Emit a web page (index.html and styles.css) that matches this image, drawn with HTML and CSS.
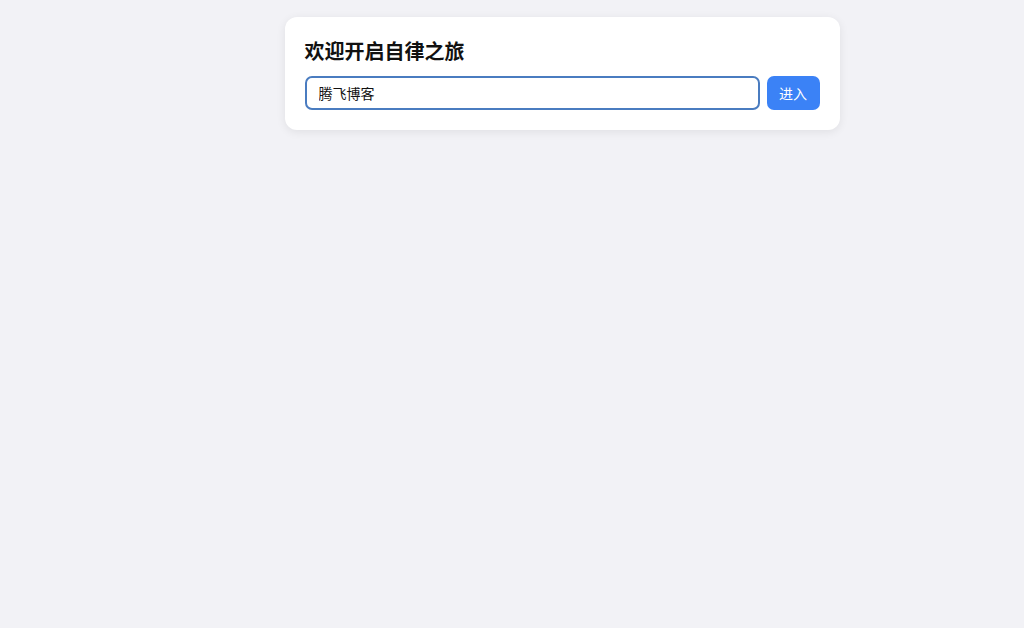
FILE: index.html
```html
<!DOCTYPE html>
<html lang="zh">
<head>
<meta charset="utf-8">
<title>欢迎开启自律之旅</title>
<link rel="stylesheet" href="styles.css">
</head>
<body>
<main class="page">
  <section class="card">
    <h1 class="title">欢迎开启自律之旅</h1>
    <form class="row">
      <input class="name-input" type="text" value="腾飞博客">
      <button class="enter-btn" type="button">进入</button>
    </form>
  </section>
</main>
</body>
</html>
```

FILE: styles.css
```css
html, body {
  margin: 0;
  padding: 0;
  height: 100%;
}
body {
  background: #f2f2f6;
  font-family: "Noto Sans CJK SC", "Noto Sans", sans-serif;
  color: #111;
}
.page {
  display: flex;
  justify-content: center;
  padding: 17px 0 0 100px;
}
.card {
  width: 555px;
  box-sizing: border-box;
  background: #fff;
  border-radius: 12px;
  padding: 20px;
  box-shadow: 0 2px 10px rgba(0, 0, 0, 0.08);
}
.title {
  margin: 0 0 11px;
  font-size: 20px;
  line-height: 28px;
  font-weight: 700;
  color: #111;
}
.row {
  display: flex;
  gap: 7px;
  margin: 0;
}
.name-input {
  flex: 1;
  height: 34px;
  box-sizing: border-box;
  border: 2px solid #4a7cc0;
  border-radius: 7px;
  padding: 0 12px;
  font-family: inherit;
  font-size: 14px;
  color: #111;
  outline: none;
  background: #fff;
}
.enter-btn {
  height: 34px;
  width: 53px;
  box-sizing: border-box;
  border: none;
  border-radius: 7px;
  background: #3b82f6;
  color: #fff;
  font-family: inherit;
  font-size: 14px;
  padding: 0;
}
```
